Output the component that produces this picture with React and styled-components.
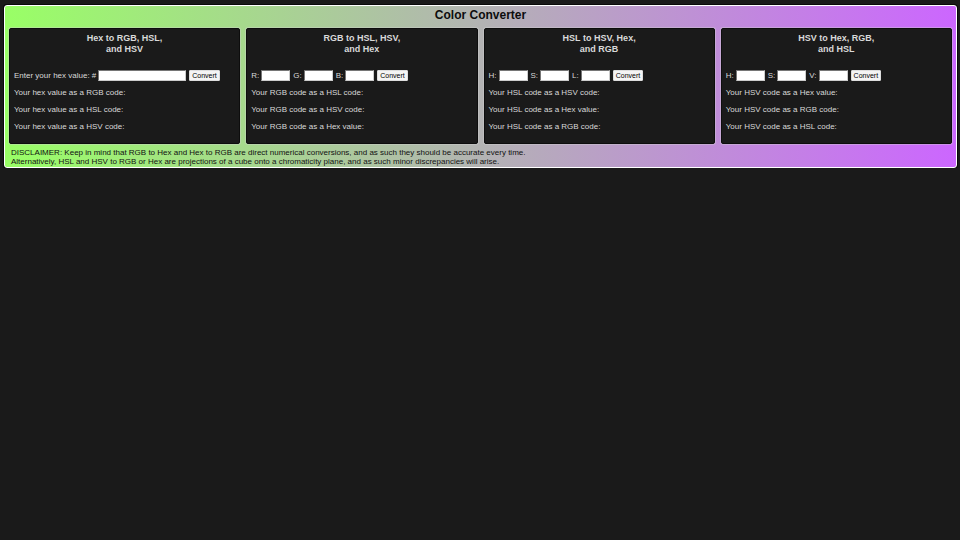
import React from "react";
import styled, { createGlobalStyle } from "styled-components";

const GlobalStyle = createGlobalStyle`
  * { box-sizing: border-box; }
  body {
    margin: 0;
    background: #1a1a1a;
    color: #d9d9d9;
    font-family: "Liberation Sans", Arial, sans-serif;
    font-size: 8px;
    line-height: 9px;
  }
`;

const Panel = styled.main`
  margin: 5px 3px 0 4px;
  border: 1px solid #fff;
  border-radius: 3px;
  background: linear-gradient(90deg, #99ff66, #b3b3b3, #cc66ff);
  box-shadow: 0 0 0 1px #0a0a0a;
`;

const Title = styled.h1`
  margin: 0;
  padding: 2px 0 5px;
  color: #0d0d0d;
  font-size: 12px;
  line-height: 15px;
  text-align: center;
`;

const Cards = styled.div`
  display: grid;
  grid-template-columns: repeat(4, 1fr);
  gap: 6px;
  padding: 0 4px;
`;

const Card = styled.section`
  padding: 4px 4px 12px;
  border: 1px solid #0d0d0d;
  border-radius: 2px;
  background: #1a1a1a;
  box-shadow: 0 0 0 1px rgba(210, 210, 210, 0.4);
`;

const CardTitle = styled.h2`
  margin: 0 0 15px;
  font-size: 9px;
  line-height: 11px;
  text-align: center;
`;

const Form = styled.form`
  display: flex;
  align-items: center;
  gap: 3px;
  height: 11px;
  margin-bottom: 7px;
`;

const Field = styled.label`
  display: flex;
  align-items: center;
  gap: 2px;
  white-space: pre;
`;

const Input = styled.input`
  width: ${(p) => (p.$wide ? "88px" : "29px")};
  height: 11px;
  padding: 0 1px;
  border: 1px solid;
  border-color: #767676 #ccc #ccc #767676;
  background: #fff;
  color: #000;
  font: inherit;
`;

const Button = styled.button`
  height: 11px;
  padding: 0 2px;
  border: 1px solid #ddd;
  border-radius: 1px;
  background: #f4f4f4;
  color: #000;
  font-family: inherit;
  font-size: 7px;
  line-height: 9px;
`;

const Results = styled.div`
  display: grid;
  gap: 8px;
`;

const Result = styled.p`
  margin: 0;
`;

const Disclaimer = styled.p`
  margin: 0;
  padding: 4px 6px 1px;
  color: #111;
`;

const converters = [
  {
    from: "hex value",
    title: ["Hex to RGB, HSL,", "and HSV"],
    fields: ["Enter your hex value: #"],
    targets: ["RGB code", "HSL code", "HSV code"],
  },
  {
    from: "RGB code",
    title: ["RGB to HSL, HSV,", "and Hex"],
    fields: ["R:", "G:", "B:"],
    targets: ["HSL code", "HSV code", "Hex value"],
  },
  {
    from: "HSL code",
    title: ["HSL to HSV, Hex,", "and RGB"],
    fields: ["H:", "S:", "L:"],
    targets: ["HSV code", "Hex value", "RGB code"],
  },
  {
    from: "HSV code",
    title: ["HSV to Hex, RGB,", "and HSL"],
    fields: ["H:", "S:", "V:"],
    targets: ["Hex value", "RGB code", "HSL code"],
  },
];

function Converter({ from, title, fields, targets }) {
  return (
    <Card>
      <CardTitle>
        {title[0]}
        <br />
        {title[1]}
      </CardTitle>
      <Form onSubmit={(e) => e.preventDefault()}>
        {fields.map((label) => (
          <Field key={label}>
            {label}
            <Input type="text" $wide={fields.length === 1} />
          </Field>
        ))}
        <Button type="submit">Convert</Button>
      </Form>
      <Results>
        {targets.map((target) => (
          <Result key={target}>
            Your {from} as a {target}:
          </Result>
        ))}
      </Results>
    </Card>
  );
}

export default function App() {
  return (
    <>
      <GlobalStyle />
      <Panel>
        <Title>Color Converter</Title>
        <Cards>
          {converters.map((c) => (
            <Converter key={c.from} {...c} />
          ))}
        </Cards>
        <Disclaimer>
          DISCLAIMER: Keep in mind that RGB to Hex and Hex to RGB are direct
          numerical conversions, and as such they should be accurate every time.
          <br />
          Alternatively, HSL and HSV to RGB or Hex are projections of a cube
          onto a chromaticity plane, and as such minor discrepancies will arise.
        </Disclaimer>
      </Panel>
    </>
  );
}
